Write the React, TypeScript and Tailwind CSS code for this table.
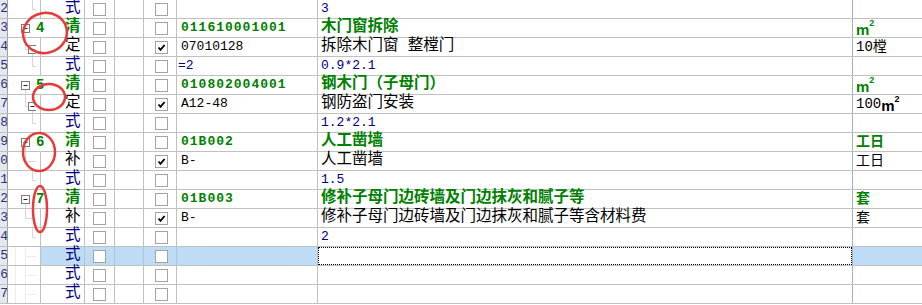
type Kind = "式" | "清" | "定" | "补";
type Tree = "root" | "def" | "sup" | "leaf" | "plain";

type Row = {
  rn: string;
  kind: Kind;
  tree: Tree;
  num?: string;
  code?: string;
  name?: string;
  unit?: string;
  sq?: boolean;
  checked?: boolean;
  selected?: boolean;
};

const rows: Row[] = [
  { rn: "12", kind: "式", tree: "leaf", name: "3" },
  { rn: "13", kind: "清", tree: "root", num: "4", code: "011610001001", name: "木门窗拆除", unit: "", sq: true },
  { rn: "14", kind: "定", tree: "def", code: "07010128", name: "拆除木门窗 整樘门", unit: "10樘", checked: true },
  { rn: "15", kind: "式", tree: "leaf", code: "=2", name: "0.9*2.1" },
  { rn: "16", kind: "清", tree: "root", num: "5", code: "010802004001", name: "钢木门（子母门）", unit: "", sq: true },
  { rn: "17", kind: "定", tree: "def", code: "A12-48", name: "钢防盗门安装", unit: "100", sq: true, checked: true },
  { rn: "18", kind: "式", tree: "leaf", name: "1.2*2.1" },
  { rn: "19", kind: "清", tree: "root", num: "6", code: "01B002", name: "人工凿墙", unit: "工日" },
  { rn: "20", kind: "补", tree: "sup", code: "B-", name: "人工凿墙", unit: "工日", checked: true },
  { rn: "21", kind: "式", tree: "leaf", name: "1.5" },
  { rn: "22", kind: "清", tree: "root", num: "7", code: "01B003", name: "修补子母门边砖墙及门边抹灰和腻子等", unit: "套" },
  { rn: "23", kind: "补", tree: "sup", code: "B-", name: "修补子母门边砖墙及门边抹灰和腻子等含材料费", unit: "套", checked: true },
  { rn: "24", kind: "式", tree: "leaf", name: "2" },
  { rn: "25", kind: "式", tree: "plain", selected: true },
  { rn: "26", kind: "式", tree: "plain" },
  { rn: "27", kind: "式", tree: "plain" },
];

const font = { fontFamily: '"Liberation Mono", "Noto Sans CJK SC", monospace' };

function MinusBox({ x, y }: { x: number; y: number }) {
  return (
    <g>
      <rect x={x} y={y} width="8" height="8" fill="#fff" stroke="#7a7a7a" />
      <line x1={x + 2} y1={y + 4} x2={x + 6} y2={y + 4} stroke="#222" />
    </g>
  );
}

function TreeLines({ tree }: { tree: Tree }) {
  const faint = "#d6d6d6";
  return (
    <svg width="28" height="18" className="shrink-0">
      {tree === "root" && (
        <>
          <line x1="17.5" y1="13.5" x2="17.5" y2="18" stroke={faint} />
          <MinusBox x={13.5} y={5.5} />
        </>
      )}
      {tree === "def" && (
        <>
          <line x1="17.5" y1="0" x2="17.5" y2="11.5" stroke={faint} />
          <line x1="17.5" y1="11.5" x2="20.5" y2="11.5" stroke={faint} />
          <line x1="24.5" y1="15.5" x2="24.5" y2="18" stroke={faint} />
          <MinusBox x={20.5} y={7.5} />
        </>
      )}
      {tree === "sup" && (
        <>
          <line x1="17.5" y1="0" x2="17.5" y2="9.5" stroke={faint} />
          <line x1="17.5" y1="9.5" x2="28" y2="9.5" stroke={faint} />
        </>
      )}
      {tree === "leaf" && (
        <>
          <line x1="24.5" y1="0" x2="24.5" y2="9.5" stroke={faint} />
          <line x1="24.5" y1="9.5" x2="28" y2="9.5" stroke={faint} />
        </>
      )}
      {tree === "plain" && (
        <>
          <line x1="7.5" y1="0" x2="7.5" y2="18" stroke="#ececec" />
          <line x1="17.5" y1="0" x2="17.5" y2="18" stroke="#ececec" />
          <line x1="17.5" y1="9.5" x2="28" y2="9.5" stroke="#ececec" />
        </>
      )}
    </svg>
  );
}

function Check({ on }: { on?: boolean }) {
  return (
    <div className="w-[13px] h-[13px] border border-[#a3a3a3] bg-white flex items-center justify-center">
      {on && (
        <svg width="11" height="11" viewBox="0 0 11 11">
          <path d="M2.5 5.5 L4.5 7.8 L8.6 3" fill="none" stroke="#000" strokeWidth="1.9" />
        </svg>
      )}
    </div>
  );
}

function SquareMeter() {
  return (
    <span
      className="inline-flex items-start font-bold leading-none"
      style={{ fontFamily: '"Liberation Sans", sans-serif' }}
    >
      <span className="text-[15px] mt-[3px]">m</span>
      <span className="text-[9px]">2</span>
    </span>
  );
}

function typeClass(k: Kind) {
  if (k === "清") return "text-[#008000] font-bold";
  if (k === "式") return "text-[#000080]";
  return "text-black";
}

function TableRow({ r }: { r: Row }) {
  const hl = r.selected ? "bg-[#bedcf6]" : "bg-white";
  const isRoot = r.kind === "清";
  const isFormula = r.kind === "式";
  return (
    <div className="flex h-[19px] border-b border-[#c0c0c0]" style={font}>
      <div className="w-[8px] shrink-0 bg-[#e3e7ef] border-r border-[#a0a0a0] overflow-hidden flex justify-end items-center text-[13px] text-[#26337a]">
        <span className="-mr-[1px]">{r.rn}</span>
      </div>

      {isRoot ? (
        <div className="w-[77px] shrink-0 border-r border-[#c0c0c0] flex items-center bg-white">
          <TreeLines tree={r.tree} />
          <span className="w-[29px] text-[14px] font-bold text-[#008000] tracking-[1px]">{r.num}</span>
          <span className={`text-[15.5px] leading-none ${typeClass(r.kind)}`}>{r.kind}</span>
        </div>
      ) : (
        <>
          <div className="w-[33px] shrink-0 border-r border-[#c0c0c0] flex items-center bg-white">
            <TreeLines tree={r.tree} />
          </div>
          <div className={`w-[44px] shrink-0 border-r border-[#c0c0c0] flex items-center pl-[24px] ${hl}`}>
            <span className={`text-[15.5px] leading-none ${typeClass(r.kind)}`}>{r.kind}</span>
          </div>
        </>
      )}

      <div className={`w-[30px] shrink-0 border-r border-[#c0c0c0] flex items-center justify-center ${hl}`}>
        <Check />
      </div>
      <div className={`w-[29px] shrink-0 border-r border-[#c0c0c0] ${hl}`} />
      <div className={`w-[33px] shrink-0 border-r border-[#c0c0c0] flex items-center justify-center pl-[2px] ${hl}`}>
        <Check on={r.checked} />
      </div>

      <div
        className={`w-[141px] shrink-0 border-r border-[#c0c0c0] flex items-center whitespace-nowrap text-[13px] ${hl} ${
          isFormula ? "pl-[1px] text-[#000080]" : "pl-[4px]"
        } ${isRoot ? "font-bold text-[#008000] tracking-[1px]" : ""} ${r.kind === "定" || r.kind === "补" ? "text-black" : ""}`}
      >
        {r.code}
      </div>

      <div className="w-[535px] shrink-0 border-r border-[#9fb2c8] bg-white">
        {r.selected ? (
          <div className="h-full border border-dotted border-black" />
        ) : (
          <div
            className={`h-full flex items-center pl-[3px] whitespace-nowrap ${
              isFormula
                ? "text-[13px] text-[#000080]"
                : isRoot
                ? "text-[15.5px] font-bold text-[#008000]"
                : "text-[15.5px] text-black"
            }`}
          >
            {r.name}
          </div>
        )}
      </div>

      <div
        className={`flex-1 flex items-center pl-[3px] whitespace-nowrap text-[14px] ${hl} ${
          isRoot ? "font-bold text-[#008000]" : "text-black"
        }`}
      >
        {r.unit}
        {r.sq && <SquareMeter />}
      </div>
    </div>
  );
}

export default function App() {
  return (
    <div className="relative w-[922px] h-[305px] overflow-hidden bg-white">
      {rows.map((r) => (
        <TableRow key={r.rn} r={r} />
      ))}

      {/* red hand-drawn marks over the tree column */}
      <svg className="absolute left-0 top-0 pointer-events-none" width="922" height="305">
        <g fill="none" stroke="#e8393b" strokeWidth="2.5">
          <ellipse cx="45" cy="33" rx="22" ry="20" transform="rotate(-12 45 33)" />
          <ellipse cx="49" cy="97" rx="16" ry="13" />
          <ellipse cx="39" cy="152" rx="16" ry="19" />
          <ellipse cx="40" cy="209" rx="7" ry="23" />
        </g>
      </svg>
    </div>
  );
}
